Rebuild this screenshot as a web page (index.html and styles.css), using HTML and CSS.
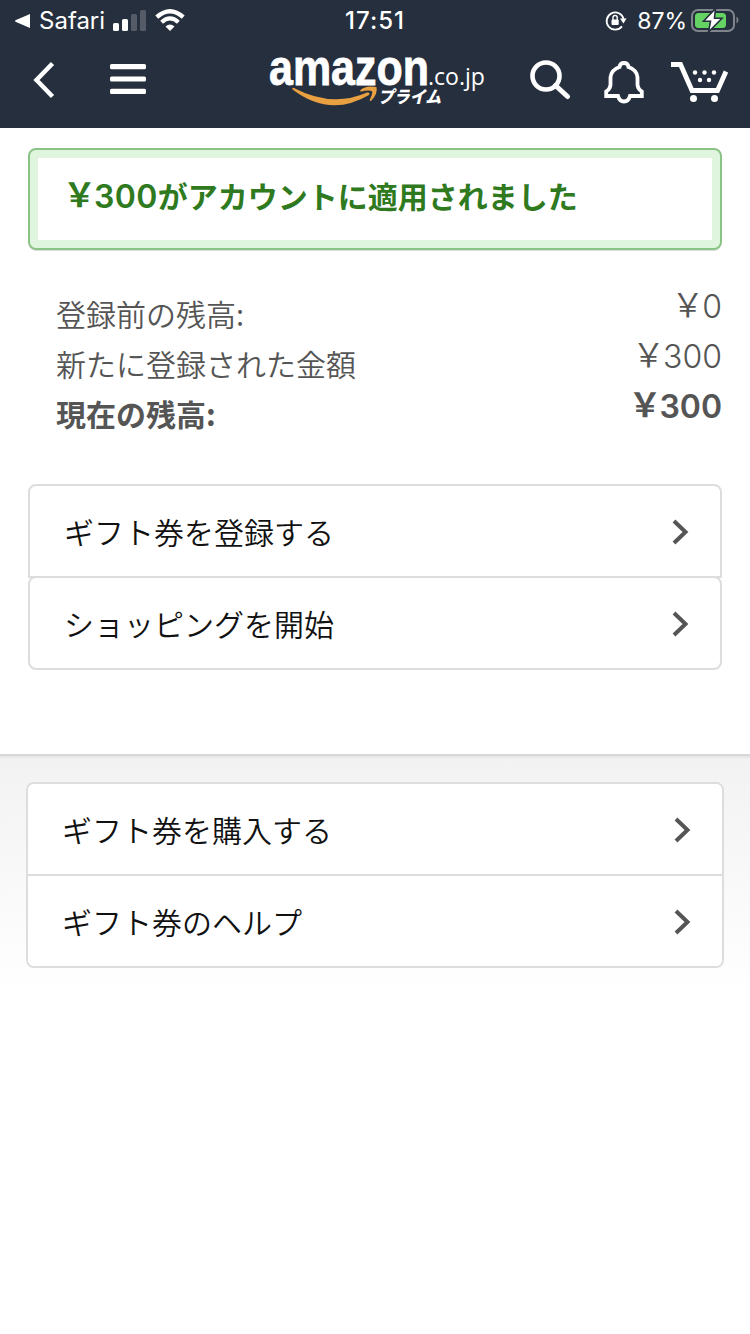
FILE: index.html
```html
<!DOCTYPE html>
<html lang="ja">

<head>
    <meta charset="UTF-8">
    <meta name="viewport" content="width=device-width, initial-scale=1.0">
    <title>Amazon.co.jp</title>
    <link rel="stylesheet" href="styles.css">
</head>

<body>
    <header class="header">
        <div class="status">
            <div class="status-left">
                <svg width="15" height="16" viewBox="0 0 15 16"><path d="M15 1v14L1 9Q-1 8 1 7z" fill="#fff"/></svg>
                <span class="back-app">Safari</span>
                <svg class="signal" width="34" height="22" viewBox="0 0 34 22">
                    <rect x="0" y="13" width="6" height="8" rx="1.5" fill="#fff"/>
                    <rect x="9" y="9" width="6" height="12" rx="1.5" fill="#fff"/>
                    <rect x="18" y="4" width="6" height="17" rx="1.5" fill="#555b67"/>
                    <rect x="27" y="0" width="6" height="21" rx="1.5" fill="#555b67"/>
                </svg>
                <svg class="wifi" width="30" height="23" viewBox="0 0 30 23" fill="none" stroke="#fff">
                    <path d="M1.8 8.2Q15-3.6 28.2 8.2" stroke-width="4.4"/>
                    <path d="M6.6 13.2Q15 5.6 23.4 13.2" stroke-width="4.2"/>
                    <path d="M10.5 17.4Q15 13.4 19.5 17.4L15 22z" fill="#fff" stroke="none"/>
                </svg>
            </div>
            <span class="clock">17:51</span>
            <div class="status-right">
                <svg class="lock" width="22" height="22" viewBox="0 0 22 22" fill="none" stroke="#fff">
                    <path d="M17 16.4A8.600 8.600 0 1 1 18.600 9" stroke-width="1.800"/>
                    <path d="M15 8.500h6.600l-3.200 5z" fill="#fff" stroke="none"/>
                    <rect x="6.500" y="9.500" width="7.200" height="5.500" rx="1" fill="#fff" stroke="none"/>
                    <path d="M8 10V7.600a2.100 2.100 0 0 1 4.200 0V10" stroke-width="1.400"/>
                </svg>
                <span class="percent">87%</span>
                <svg class="battery" width="48" height="26" viewBox="0 0 48 26">
                    <rect x="1" y="2" width="42" height="21" rx="6" fill="none" stroke="#80858d" stroke-width="2"/>
                    <rect x="4" y="5" width="31" height="15" rx="3.500" fill="#65d364"/>
                    <path d="M45.500 8.500v7q2-1 2-3.500t-2-3.500z" fill="#80858d"/>
                    <path d="M24.500.5L12.500 13.300h7L17.500 24 31 10.200h-7.500z" fill="#fff" stroke="#262f3d" stroke-width="1.600"/>
                </svg>
            </div>
        </div>
        <nav class="nav">
            <svg class="back" width="22" height="38" viewBox="0 0 22 38"><path d="M19.500 2.500L3.500 19l16 16.500" fill="none" stroke="#fff" stroke-width="4.500"/></svg>
            <svg class="menu" width="36" height="32" viewBox="0 0 36 32" fill="#fff">
                <rect y="0" width="36" height="5.200" rx="1.500"/>
                <rect y="12.400" width="36" height="5.200" rx="1.500"/>
                <rect y="24.800" width="36" height="5.200" rx="1.500"/>
            </svg>
            <svg class="logo" width="220" height="78" viewBox="0 -9 220 78">
                <text class="logo-name" x="1" y="34.500" textLength="160" lengthAdjust="spacingAndGlyphs">amazon</text>
                <text class="logo-domain" x="160" y="34.500" textLength="57" lengthAdjust="spacingAndGlyphs">.co.jp</text>
                <path d="M24.500 39.500q-1-2.500 1.500-1.500Q64 58 99 42.500q3.500-.5 2 2.500Q62 68 24.500 39.500z" fill="#e8a040"/>
                <path d="M92.500 40q5.500-5 16-3 1.500 6.500-5 13.500-2.500 1.500-1.500-1.200Q105 43 104 41.300 101 39.500 93.500 41.500q-2 0-1-1.500z" fill="#e8a040"/>
                <text class="logo-prime" x="110" y="52.500" textLength="63" lengthAdjust="spacingAndGlyphs">プライム</text>
            </svg>
            <div class="nav-icons">
                <svg class="search" width="42" height="40" viewBox="0 0 42 40" fill="none" stroke="#fff">
                    <circle cx="16" cy="16" r="13.500" stroke-width="4.600"/>
                    <path d="M25.500 25.500l12 11" stroke-width="5" stroke-linecap="round"/>
                </svg>
                <svg class="bell" width="40" height="44" viewBox="0 0 40 44" fill="none" stroke="#fff" stroke-width="3.800">
                    <path d="M2.200 36v-4.500q3.800-2.500 4.300-6.500V17.500Q7 10 15.500 7q.5-4 4.500-4t4.500 4Q33 10 33.500 17.500V25q.5 4 4.300 6.500V36H26q-1.500 5.500-6 5.500T14 36z"/>
                </svg>
                <svg width="58" height="42" viewBox="0 0 58 42">
                    <path d="M1 3.500h9.500L22 29.500h25.500L56 10.500" fill="none" stroke="#fff" stroke-width="4.800"/>
                    <g fill="#fff">
                        <circle cx="25" cy="11.500" r="2.200"/><circle cx="34.500" cy="11.500" r="2.200"/><circle cx="44" cy="11.500" r="2.200"/>
                        <circle cx="30" cy="19" r="2.200"/><circle cx="39" cy="19" r="2.200"/>
                        <circle cx="23.500" cy="37.500" r="3.500"/><circle cx="44.500" cy="37.500" r="3.500"/>
                    </g>
                </svg>
            </div>
        </nav>
    </header>

    <main class="main">
        <div class="alert">
            <h1 class="alert-text"><span class="yen">&#xFFE5;</span><span class="num">300</span>がアカウントに適用されました</h1>
        </div>

        <dl class="balance">
            <div class="balance-row">
                <dt>登録前の残高:</dt>
                <dd><span class="yen">&#xFFE5;</span><span class="num">0</span></dd>
            </div>
            <div class="balance-row">
                <dt>新たに登録された金額</dt>
                <dd><span class="yen">&#xFFE5;</span><span class="num">300</span></dd>
            </div>
            <div class="balance-row current">
                <dt>現在の残高:</dt>
                <dd><span class="yen">&#xFFE5;</span><span class="num">300</span></dd>
            </div>
        </dl>

        <div class="actions">
            <a class="item">ギフト券を登録する
                <svg class="arrow" width="17" height="26" viewBox="0 0 17 26"><path d="M2 2l11.500 11L2 24"/></svg></a>
            <a class="item">ショッピングを開始
                <svg class="arrow" width="17" height="26" viewBox="0 0 17 26"><path d="M2 2l11.500 11L2 24"/></svg></a>
        </div>
    </main>

    <section class="more">
        <div class="links">
            <a class="item">ギフト券を購入する
                <svg class="arrow" width="17" height="26" viewBox="0 0 17 26"><path d="M2 2l11.500 11L2 24"/></svg></a>
            <a class="item">ギフト券のヘルプ
                <svg class="arrow" width="17" height="26" viewBox="0 0 17 26"><path d="M2 2l11.500 11L2 24"/></svg></a>
        </div>
    </section>
</body>

</html>
```
FILE: styles.css
```css
* {
    box-sizing: border-box;
}

body {
    margin: 0;
    background-color: #fff;
    color: #111;
    font-family: "Noto Sans CJK JP", sans-serif;
    font-size: 30px;
    font-weight: 350;
    line-height: 50px;
}

svg {
    display: block;
    flex: none;
}

.header {
    height: 128px;
    background-color: #262f3d;
    color: #fff;
}

.status {
    display: grid;
    grid-template-columns: 1fr auto 1fr;
    align-items: center;
    height: 40px;
    padding: 0 11px 0 15px;
    font-family: Inter, sans-serif;
    font-size: 24px;
    font-weight: 400;
    line-height: 40px;
}

.status-left,
.status-right {
    display: flex;
    align-items: center;
}

.status-right {
    justify-content: flex-end;
}

.back-app {
    width: 66px;
    margin-left: 9px;
    padding-top: 1px;
}

.signal {
    margin-left: 8px;
}

.wifi {
    margin-left: 8px;
}

.clock {
    margin-left: -4px;
    padding-top: 1px;
    font-weight: 500;
    font-size: 24px;
    letter-spacing: 1px;
}

.percent {
    margin: 0 4px 0 10px;
    padding-top: 1px;
    font-size: 23px;
}

.nav {
    display: flex;
    align-items: center;
    height: 80px;
    padding: 0 22px 0 33px;
}

.menu {
    margin-left: 55px;
}

.logo {
    margin-left: 122px;
}

.logo-name {
    fill: #fff;
    stroke: #fff;
    stroke-width: 0.8px;
    font-family: "Liberation Sans", sans-serif;
    font-size: 50px;
    font-weight: bold;
}

.logo-domain {
    fill: #fff;
    font-family: "Open Sans", sans-serif;
    font-size: 24px;
    font-weight: 400;
}

.logo-prime {
    fill: #fff;
    font-size: 17px;
    font-weight: 900;
    font-style: italic;
}

.nav-icons {
    display: flex;
    align-items: center;
    justify-content: space-between;
    width: 198px;
    margin-left: auto;
    padding-top: 4px;
}

.search {
    margin-bottom: 4px;
}

.bell {
    margin-left: 6px;
}

.main {
    height: 626px;
    padding: 20px 28px 0;
}

.alert {
    height: 102px;
    padding: 20px 28px 0 33px;
    border: 2px solid #8bc285;
    border-radius: 8px;
    box-shadow: inset 0 0 0 8px #dff5dd, 0 2px 0 -1px #ddd;
}

.alert-text {
    margin: 0;
    height: 50px;
    color: #2f7a1f;
    font-size: 30px;
    font-weight: 600;
}

.num {
    font-family: Inter, sans-serif;
    font-size: 32px;
}

.alert-text .num {
    letter-spacing: 0.4px;
}

.yen {
    margin-right: -2px;
    font-size: 33px;
    line-height: 40px;
    vertical-align: 1px;
}

.balance {
    margin: 40px 0 0;
    padding-left: 28px;
    color: #555;
}

.balance-row {
    display: flex;
    justify-content: space-between;
    height: 50px;
}

dt {
    margin-top: -2px;
}

dd {
    margin: -10px 0 0;
}

.current {
    font-weight: 600;
}

.actions {
    margin-top: 44px;
}

.item {
    display: flex;
    align-items: center;
    justify-content: space-between;
    height: 94px;
    padding: 0 31px 0 34px;
    background-color: #fff;
}

.arrow {
    margin-top: 1px;
    fill: none;
    stroke: #555;
    stroke-width: 4;
}

.actions .item {
    border: 2px solid #ddd;
    border-radius: 8px;
}

.actions .item:first-child {
    border-radius: 8px 8px 0 0;
}

.actions .item + .item {
    margin-top: -2px;
}

.more {
    height: 238px;
    padding: 26px 26px 0;
    border-top: 2px solid #d8d8d8;
    background-image: linear-gradient(#f2f2f2, #fff);
    box-shadow: inset 0 3px 3px -2px #ddd;
}

.links {
    border: 2px solid #ddd;
    border-radius: 8px;
    overflow: hidden;
}

.links .item {
    height: 90px;
}

.links .item + .item {
    height: 92px;
    border-top: 2px solid #ddd;
}
```
